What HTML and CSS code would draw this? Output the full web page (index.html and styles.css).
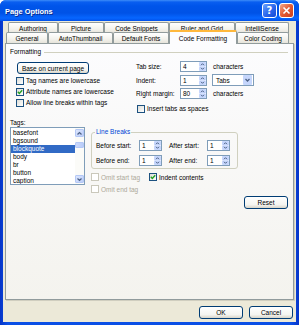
FILE: index.html
```html
<!DOCTYPE html>
<html>
<head>
<meta charset="utf-8">
<link rel="stylesheet" href="styles.css">
</head>
<body>
<div class="window">
  <div class="titlebar">
    <span class="title">Page Options</span>
    <div class="tbtns">
      <span class="tbtn help">?</span>
      <span class="tbtn close"><svg width="9" height="9" viewBox="0 0 9 9"><path d="M1.5 1.5 L7.5 7.5 M7.5 1.5 L1.5 7.5" stroke="#fff" stroke-width="1.6" fill="none"/></svg></span>
    </div>
  </div>
  <div class="client">
    <div class="tabrow back">
      <div class="tab w50">Authoring</div>
      <div class="tab w46">Picture</div>
      <div class="tab w65">Code Snippets</div>
      <div class="tab w66">Ruler and Grid</div>
      <div class="tab w54">IntelliSense</div>
    </div>
    <div class="tabrow front">
      <div class="tab w42">General</div>
      <div class="tab w65">AutoThumbnail</div>
      <div class="tab w56">Default Fonts</div>
      <div class="tab sel w68">Code Formatting</div>
      <div class="tab w52">Color Coding</div>
    </div>
    <div class="panel">
      <div class="sechead"><span>Formatting</span><i class="rule"></i></div>
      <div class="top">
        <div class="leftcol">
          <div class="btn base">Base on current page</div>
          <div class="chk first"><span class="box"></span>Tag names are lowercase</div>
          <div class="chk"><span class="box"><svg width="6" height="6" viewBox="0 0 6 6"><path d="M0.8 2.8 L2.3 4.4 L5.2 1.2" stroke="#21A121" stroke-width="1.4" fill="none"/></svg></span>Attribute names are lowercase</div>
          <div class="chk"><span class="box"></span>Allow line breaks within tags</div>
        </div>
        <div class="rightcol">
          <div class="frow">
            <span class="lbl l44">Tab size:</span>
            <span class="spin big"><span class="val">4</span><svg width="7" height="9" viewBox="0 0 7 9"><rect x="0" y="0" width="7" height="4.4" rx="1" fill="#C6D6FC"/><rect x="0" y="4.6" width="7" height="4.4" rx="1" fill="#C6D6FC"/><path d="M2 3.2 L3.5 1.7 L5 3.2 M2 5.8 L3.5 7.3 L5 5.8" stroke="#4D6185" stroke-width="1" fill="none"/></svg></span>
            <span class="unit">characters</span>
          </div>
          <div class="frow r2">
            <span class="lbl l44">Indent:</span>
            <span class="spin big"><span class="val">1</span><svg width="7" height="9" viewBox="0 0 7 9"><rect x="0" y="0" width="7" height="4.4" rx="1" fill="#C6D6FC"/><rect x="0" y="4.6" width="7" height="4.4" rx="1" fill="#C6D6FC"/><path d="M2 3.2 L3.5 1.7 L5 3.2 M2 5.8 L3.5 7.3 L5 5.8" stroke="#4D6185" stroke-width="1" fill="none"/></svg></span>
            <span class="select"><span class="sval">Tabs</span><svg width="9" height="10" viewBox="0 0 9 10"><rect x="0" y="0" width="9" height="10" rx="1" fill="#C6D6FC"/><path d="M2.5 4 L4.5 6 L6.5 4" stroke="#4D6185" stroke-width="1.3" fill="none"/></svg></span>
          </div>
          <div class="frow r3">
            <span class="lbl l44">Right margin:</span>
            <span class="spin big"><span class="val">80</span><svg width="7" height="9" viewBox="0 0 7 9"><rect x="0" y="0" width="7" height="4.4" rx="1" fill="#C6D6FC"/><rect x="0" y="4.6" width="7" height="4.4" rx="1" fill="#C6D6FC"/><path d="M2 3.2 L3.5 1.7 L5 3.2 M2 5.8 L3.5 7.3 L5 5.8" stroke="#4D6185" stroke-width="1" fill="none"/></svg></span>
            <span class="unit">characters</span>
          </div>
          <div class="chk r4"><span class="box"></span>Insert tabs as spaces</div>
        </div>
      </div>
      <div class="tagslbl">Tags:</div>
      <div class="bottom">
        <div class="listbox">
          <div class="items">
            <div class="item">basefont</div>
            <div class="item">bgsound</div>
            <div class="item on">blockquote</div>
            <div class="item">body</div>
            <div class="item">br</div>
            <div class="item">button</div>
            <div class="item">caption</div>
          </div>
          <div class="sb">
            <span class="sbbtn"><svg width="7" height="7" viewBox="0 0 7 7"><path d="M1.5 4.5 L3.5 2.5 L5.5 4.5" stroke="#4D6185" stroke-width="1.2" fill="none"/></svg></span>
            <span class="thumb"></span>
            <span class="sbbtn down"><svg width="7" height="7" viewBox="0 0 7 7"><path d="M1.5 2.5 L3.5 4.5 L5.5 2.5" stroke="#4D6185" stroke-width="1.2" fill="none"/></svg></span>
          </div>
        </div>
        <div class="rarea">
          <div class="group">
            <div class="legend">Line Breaks</div>
            <div class="grow">
              <span class="lbl l43">Before start:</span>
              <span class="spin small"><span class="val">1</span><svg width="7" height="9" viewBox="0 0 7 9"><rect x="0" y="0" width="7" height="4.4" rx="1" fill="#C6D6FC"/><rect x="0" y="4.6" width="7" height="4.4" rx="1" fill="#C6D6FC"/><path d="M2 3.2 L3.5 1.7 L5 3.2 M2 5.8 L3.5 7.3 L5 5.8" stroke="#4D6185" stroke-width="1" fill="none"/></svg></span>
              <span class="lbl l38 after">After start:</span>
              <span class="spin small"><span class="val">1</span><svg width="7" height="9" viewBox="0 0 7 9"><rect x="0" y="0" width="7" height="4.4" rx="1" fill="#C6D6FC"/><rect x="0" y="4.6" width="7" height="4.4" rx="1" fill="#C6D6FC"/><path d="M2 3.2 L3.5 1.7 L5 3.2 M2 5.8 L3.5 7.3 L5 5.8" stroke="#4D6185" stroke-width="1" fill="none"/></svg></span>
            </div>
            <div class="grow">
              <span class="lbl l43">Before end:</span>
              <span class="spin small"><span class="val">1</span><svg width="7" height="9" viewBox="0 0 7 9"><rect x="0" y="0" width="7" height="4.4" rx="1" fill="#C6D6FC"/><rect x="0" y="4.6" width="7" height="4.4" rx="1" fill="#C6D6FC"/><path d="M2 3.2 L3.5 1.7 L5 3.2 M2 5.8 L3.5 7.3 L5 5.8" stroke="#4D6185" stroke-width="1" fill="none"/></svg></span>
              <span class="lbl l38 after">After end:</span>
              <span class="spin small"><span class="val">1</span><svg width="7" height="9" viewBox="0 0 7 9"><rect x="0" y="0" width="7" height="4.4" rx="1" fill="#C6D6FC"/><rect x="0" y="4.6" width="7" height="4.4" rx="1" fill="#C6D6FC"/><path d="M2 3.2 L3.5 1.7 L5 3.2 M2 5.8 L3.5 7.3 L5 5.8" stroke="#4D6185" stroke-width="1" fill="none"/></svg></span>
            </div>
          </div>
          <div class="crow c1">
            <div class="chk dis l58"><span class="box"></span>Omit start tag</div>
            <div class="chk"><span class="box"><svg width="6" height="6" viewBox="0 0 6 6"><path d="M0.8 2.8 L2.3 4.4 L5.2 1.2" stroke="#21A121" stroke-width="1.4" fill="none"/></svg></span>Indent contents</div>
          </div>
          <div class="crow c2">
            <div class="chk dis"><span class="box"></span>Omit end tag</div>
          </div>
          <div class="btn reset">Reset</div>
        </div>
      </div>
    </div>
    <div class="footer">
      <div class="btn">OK</div>
      <div class="btn">Cancel</div>
    </div>
  </div>
</div>
</body>
</html>
```
FILE: styles.css
```css
* { box-sizing: border-box; }
body {
  margin: 0;
  background: #fff;
  font-family: "Liberation Sans", Arial, sans-serif;
  font-size: 6.5px;
  color: #000;
}
.window {
  width: 299px;
  height: 325px;
  background: linear-gradient(to right, #0735C8, #0A4FE6 8px, #0A4FE6 291px, #0735C8);
  border-radius: 6px 6px 0 0;
  display: flex;
  flex-direction: column;
  overflow: hidden;
}
.titlebar {
  height: 21px;
  flex: none;
  display: flex;
  align-items: center;
  padding: 0 5px;
  background: linear-gradient(#3D8DF9 0, #0A5FF0 2px, #0055EA 6px, #0052E6 13px, #0766FF 18px, #0050EA 21px);
}
.title {
  flex: 1;
  color: #fff;
  font-weight: bold;
  font-size: 7.4px;
  text-shadow: 1px 1px #0A2C8E;
  padding-top: 1px;
}
.tbtns { display: flex; gap: 2px; }
.tbtn {
  width: 15px;
  height: 15px;
  border: 1px solid #fff;
  border-radius: 3px;
  display: flex;
  align-items: center;
  justify-content: center;
}
.help {
  background: linear-gradient(135deg, #6AA2FF, #2A66EC 55%, #1447D6);
  color: #fff;
  font-weight: bold;
  font-size: 10px;
  font-family: "DejaVu Sans", sans-serif;
}
.close {
  background: linear-gradient(135deg, #F4A88B, #E35A33 50%, #C73D1E);
}
.client {
  flex: 1;
  margin: 0 3px 3px;
  background: #ECE9D8;
  display: flex;
  flex-direction: column;
  padding: 1px 2px 0 2px;
}
.tabrow { display: flex; height: 11px; flex: none; }
.tabrow.back { margin-left: 3px; }
.tabrow.front { margin-left: 1px; margin-top: -1px; }
.tab {
  height: 100%;
  border: 1px solid #919B9C;
  border-bottom: none;
  border-radius: 2px 2px 0 0;
  background: linear-gradient(#FFFFFF, #F3F2EC 60%, #E6E4DB);
  display: flex;
  align-items: center;
  justify-content: center;
  white-space: nowrap;
}
.tab.sel {
  position: relative;
  z-index: 2;
  height: 14px;
  margin-top: -2px;
  border-top: 2px solid #FFB83C;
  background: #FCFCFE;
  padding-top: 0;
}
.w42 { width: 42px; }
.w46 { width: 46px; }
.w50 { width: 50px; }
.w52 { width: 52px; }
.w54 { width: 54px; }
.w56 { width: 56px; }
.w65 { width: 65px; }
.w66 { width: 66px; }
.w68 { width: 68px; }
.panel {
  height: 257px;
  flex: none;
  border: 1px solid #919B9C;
  background: linear-gradient(#FCFCFE, #F4F3EE);
  padding: 4px 5px 0 4px;
  box-shadow: 1px 1px 0 #D0CEBF;
  display: flex;
  flex-direction: column;
}
.sechead {
  height: 8px;
  display: flex;
  align-items: center;
  line-height: 8px;
}
.rule {
  flex: 1;
  height: 1px;
  background: #D0D0BF;
  margin-left: 3px;
}
.top { display: flex; margin-top: 5px; }
.leftcol {
  width: 119px;
  margin-left: 7px;
  display: flex;
  flex-direction: column;
}
.btn {
  height: 13px;
  width: 44px;
  border: 1px solid #003C74;
  border-radius: 3px;
  background: linear-gradient(#FFFFFF, #F4F4F0 70%, #D8D4C8);
  display: flex;
  align-items: center;
  justify-content: center;
  white-space: nowrap;
  flex: none;
}
.btn.base { width: 72px; height: 12px; margin-top: 1px; }
.chk {
  display: flex;
  align-items: center;
  height: 11px;
  gap: 2px;
  white-space: nowrap;
}
.leftcol .chk { margin-left: -1px; }
.leftcol .chk.first { margin-top: 1px; }
.box {
  width: 8px;
  height: 8px;
  border: 1px solid #1C5180;
  background: linear-gradient(135deg, #DCDCD7, #FFFFFF);
  display: flex;
  align-items: center;
  justify-content: center;
  flex: none;
}
.chk.dis { color: #ACA899; }
.chk.dis .box { border-color: #CAC8BB; background: #fff; }
.rightcol { display: flex; flex-direction: column; }
.frow { display: flex; align-items: center; height: 11px; }
.frow.r2 { height: 12px; margin-top: 2px; }
.frow.r3 { margin-top: 2px; }
.chk.r4 { margin-top: 4px; margin-left: 1px; }
.lbl { white-space: nowrap; flex: none; }
.l44 { width: 44px; }
.l43 { width: 43px; }
.l38 { width: 38px; }
.l58 { width: 58px; }
.spin {
  display: flex;
  align-items: center;
  height: 11px;
  border: 1px solid #7F9DB9;
  background: #fff;
  flex: none;
}
.spin.big { width: 27px; }
.spin.small { width: 23px; }
.spin .val { flex: 1; padding-left: 2px; line-height: 9px; }
.unit { margin-left: 6px; }
.select {
  display: flex;
  align-items: center;
  width: 42px;
  height: 12px;
  margin-left: 5px;
  border: 1px solid #7F9DB9;
  background: #fff;
  padding-right: 1px;
}
.sval { flex: 1; padding-left: 3px; }
.tagslbl { margin-top: 5px; height: 8px; line-height: 8px; }
.bottom { display: flex; }
.listbox {
  width: 75px;
  height: 58px;
  border: 1px solid #7F9DB9;
  background: #fff;
  display: flex;
  overflow: hidden;
  flex: none;
}
.items { flex: 1; padding-top: 1px; }
.item { height: 8px; line-height: 8px; padding-left: 2px; white-space: nowrap; }
.item.on { background: #316AC5; color: #fff; }
.sb {
  width: 9px;
  display: flex;
  flex-direction: column;
  background: #FBFBF8;
  padding: 1px 0;
}
.sbbtn {
  height: 8px;
  border-radius: 1px;
  background: linear-gradient(135deg, #DCE6FD, #BBCDF9);
  border: 1px solid #B4C8F6;
  display: flex;
  align-items: center;
  justify-content: center;
}
.sbbtn.down { margin-top: auto; }
.thumb {
  height: 6px;
  margin-top: 5px;
  border-radius: 1px;
  background: linear-gradient(to right, #CBD9FC, #B9CCF9);
  border: 1px solid #B4C8F6;
}
.rarea {
  flex: 1;
  margin-left: 6px;
  display: flex;
  flex-direction: column;
}
.group {
  width: 147px;
  margin-top: 5px;
  border: 1px solid #D0D0BF;
  border-radius: 3px;
  padding: 0 0 2px 4px;
}
.legend {
  margin-top: -5px;
  margin-left: -1px;
  padding: 0 1px;
  width: max-content;
  height: 8px;
  line-height: 8px;
  color: #0046D5;
  background: #F9F9F8;
}
.grow { display: flex; align-items: center; height: 11px; margin-top: 4px; }
.after { margin-left: 7px; }
.crow { display: flex; align-items: center; }
.crow .chk { height: 10px; }
.crow.c1 { margin-top: 3px; }
.crow.c2 { margin-top: 2px; }
.btn.reset { margin-top: 2px; align-self: flex-end; }
.footer {
  display: flex;
  justify-content: flex-end;
  gap: 6px;
  margin-top: 6px;
  padding-right: 1px;
}
```
